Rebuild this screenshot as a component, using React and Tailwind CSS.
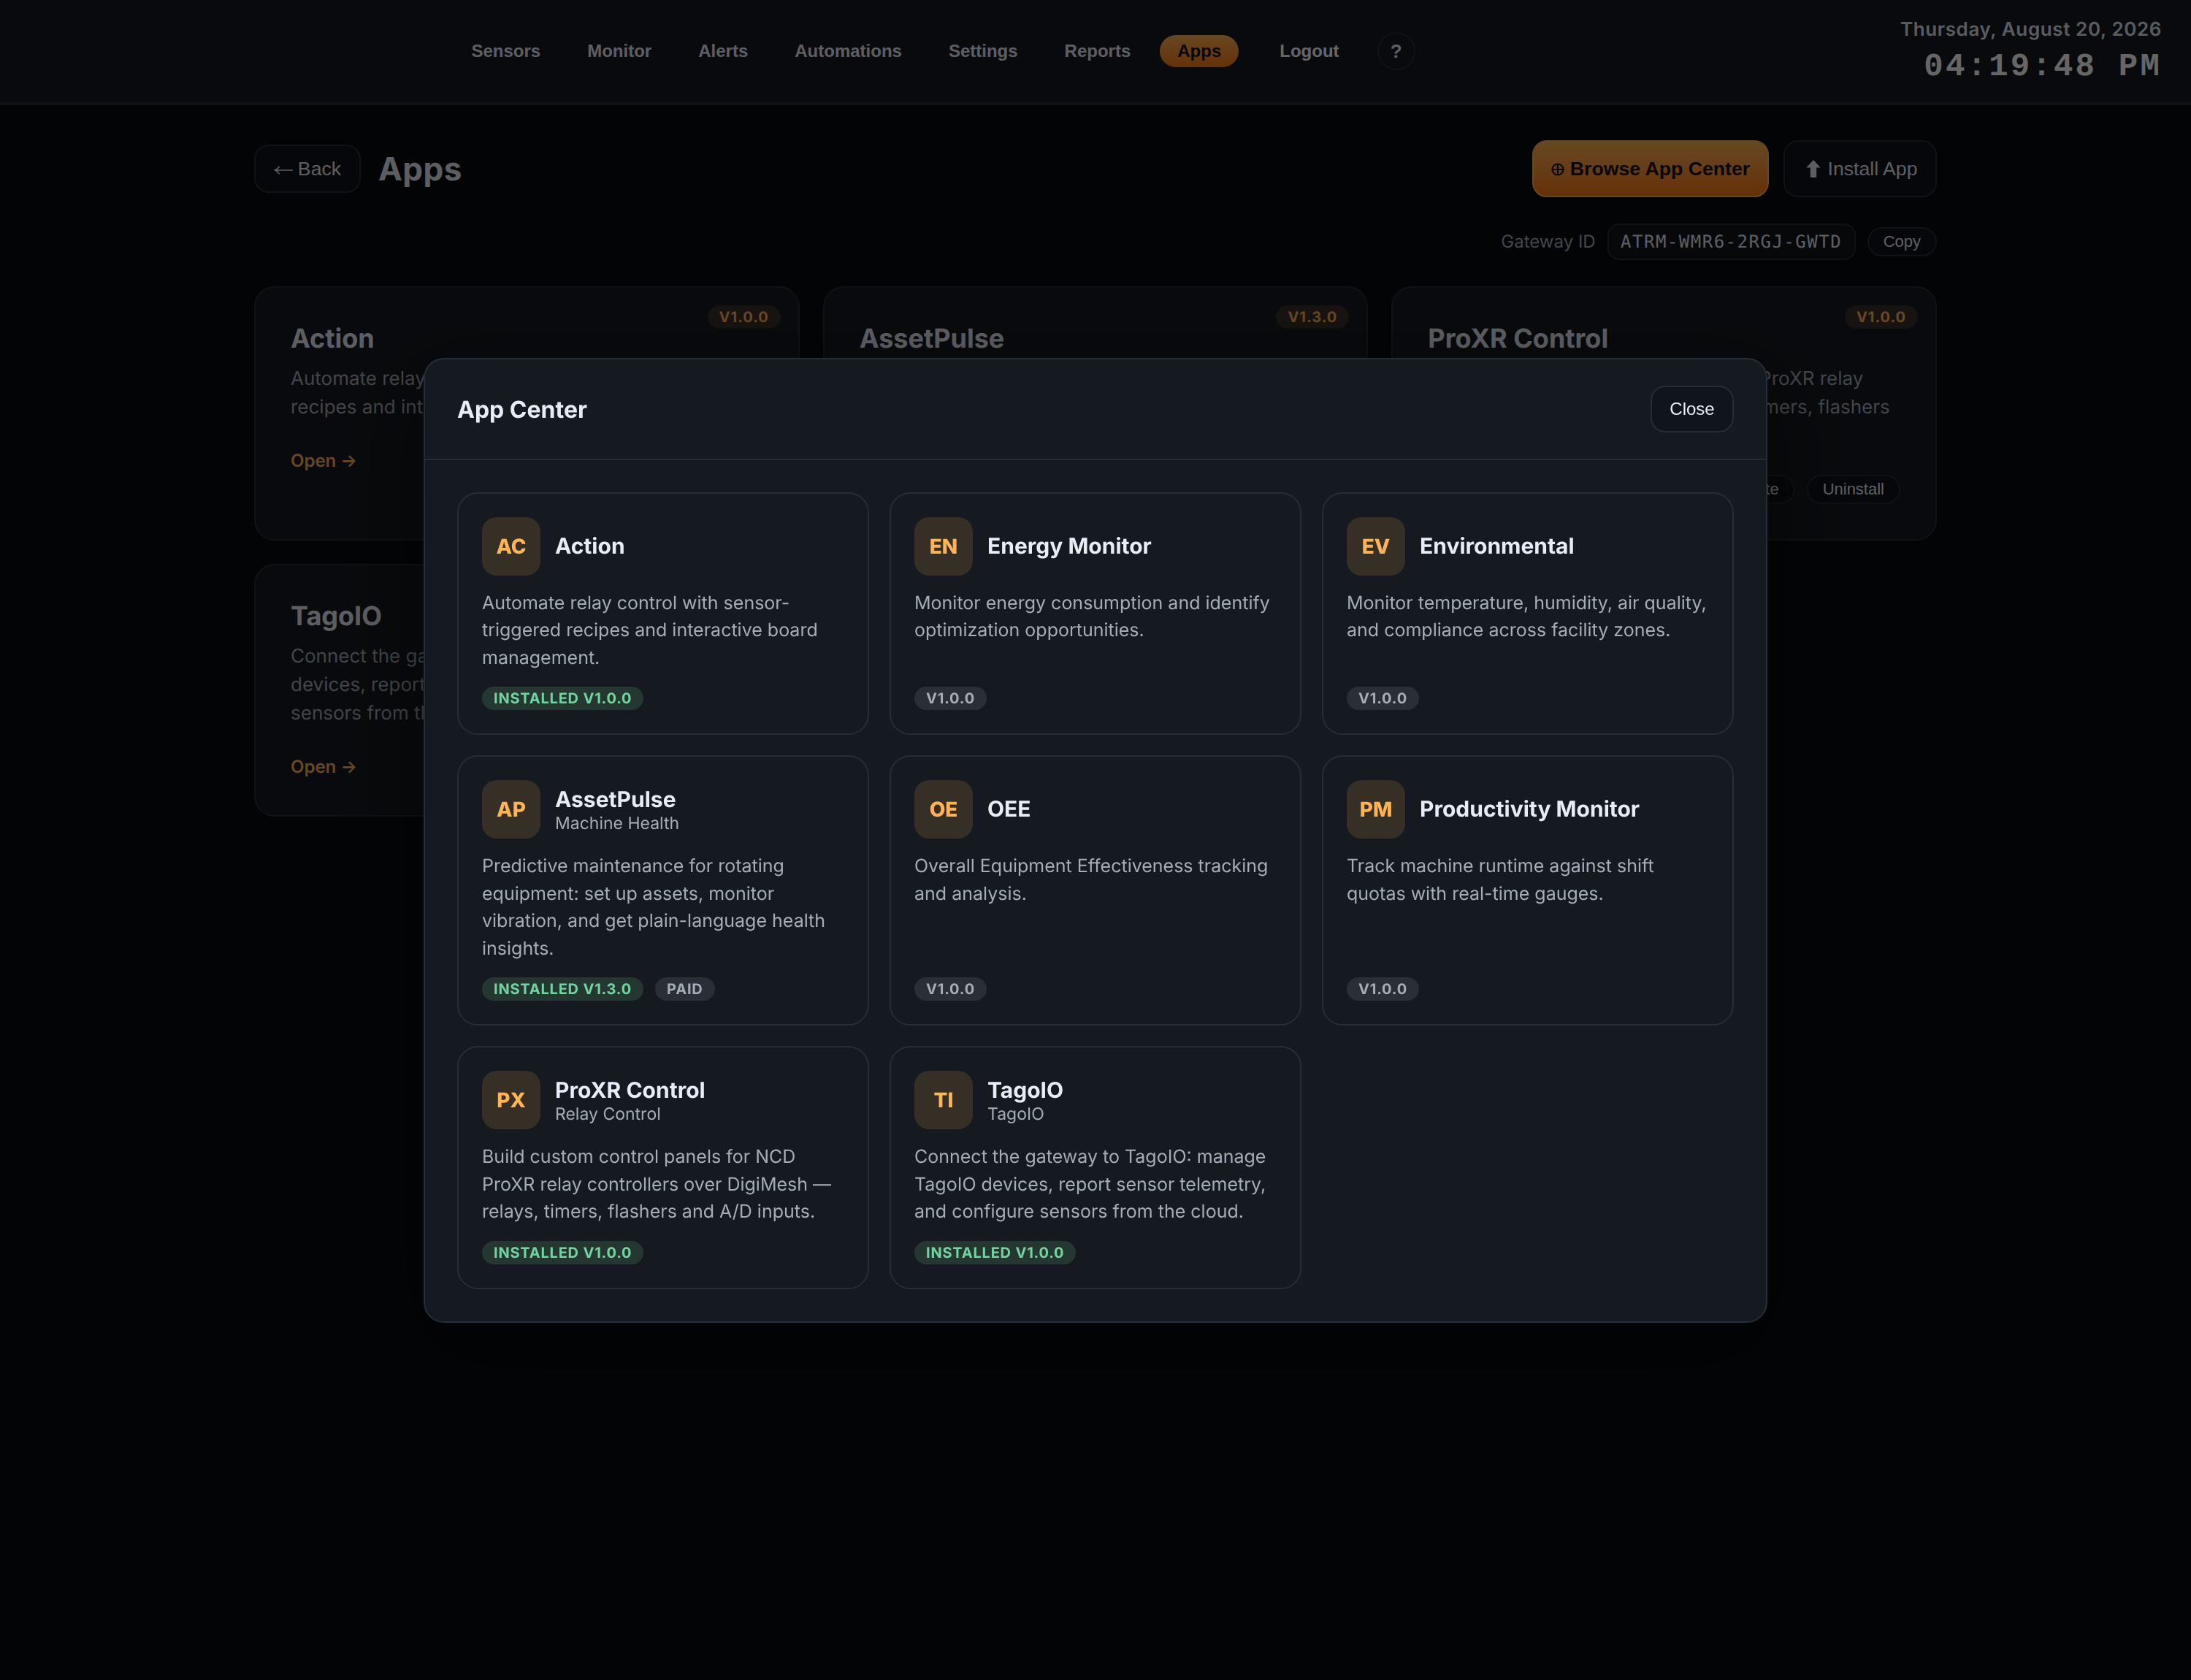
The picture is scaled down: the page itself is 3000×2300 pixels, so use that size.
import React from 'react';

const NAV_ITEMS = ['Sensors', 'Monitor', 'Alerts', 'Automations', 'Settings', 'Reports', 'Apps'];

const INSTALLED_APPS = [
    {
        name: 'Action',
        version: 'v1.0.0',
        description: 'Automate relay control with sensor-triggered recipes and interactive board management.',
    },
    {
        name: 'AssetPulse',
        version: 'v1.3.0',
        description: 'Predictive maintenance for rotating equipment: set up assets, monitor vibration, and get plain-language health insights.',
        removable: true,
    },
    {
        name: 'ProXR Control',
        version: 'v1.0.0',
        description: 'Build custom control panels for NCD ProXR relay controllers over DigiMesh — relays, timers, flashers and A/D inputs.',
        removable: true,
    },
    {
        name: 'TagoIO',
        version: 'v1.0.0',
        description: 'Connect the gateway to TagoIO: manage TagoIO devices, report sensor telemetry, and configure sensors from the cloud.',
        removable: true,
    },
];

const CATALOG = [
    { code: 'AC', name: 'Action', description: 'Automate relay control with sensor-triggered recipes and interactive board management.', version: '1.0.0', installed: true },
    { code: 'EN', name: 'Energy Monitor', description: 'Monitor energy consumption and identify optimization opportunities.', version: '1.0.0' },
    { code: 'EV', name: 'Environmental', description: 'Monitor temperature, humidity, air quality, and compliance across facility zones.', version: '1.0.0' },
    { code: 'AP', name: 'AssetPulse', subtitle: 'Machine Health', description: 'Predictive maintenance for rotating equipment: set up assets, monitor vibration, and get plain-language health insights.', version: '1.3.0', installed: true, paid: true },
    { code: 'OE', name: 'OEE', description: 'Overall Equipment Effectiveness tracking and analysis.', version: '1.0.0' },
    { code: 'PM', name: 'Productivity Monitor', description: 'Track machine runtime against shift quotas with real-time gauges.', version: '1.0.0' },
    { code: 'PX', name: 'ProXR Control', subtitle: 'Relay Control', description: 'Build custom control panels for NCD ProXR relay controllers over DigiMesh — relays, timers, flashers and A/D inputs.', version: '1.0.0', installed: true },
    { code: 'TI', name: 'TagoIO', subtitle: 'TagoIO', description: 'Connect the gateway to TagoIO: manage TagoIO devices, report sensor telemetry, and configure sensors from the cloud.', version: '1.0.0', installed: true },
];

const PillButton = ({ children }) => (
    <button className="h-10 shrink-0 rounded-full border-2 border-[#262e37] bg-[#0e121a] px-5 font-['Liberation_Sans',sans-serif] text-[22px] leading-none">
        {children}
    </button>
);

/* Top bar with navigation and the clock */
const Header = () => (
    <header className="flex h-36 items-center border-b-4 border-[#26313a] bg-[#151a21] pr-10 pl-[621.5px]">
        <nav className="flex items-center gap-4 font-['Liberation_Sans',sans-serif] text-2xl leading-7 font-bold">
            {NAV_ITEMS.map((item) => (
                <button
                    key={item}
                    className={
                        item === 'Apps'
                            ? 'h-11 rounded-full bg-linear-to-b from-[#ffb454] to-[#ff7a0a] px-6 text-[#14100a]'
                            : 'h-11 rounded-full px-6'
                    }
                >
                    {item}
                </button>
            ))}
            <button className="ml-3 h-11 px-7 text-white">Logout</button>
            <button className="ml-2 h-13 w-13 rounded-full border-2 border-[#262e37] text-[26px]">?</button>
        </nav>
        <div className="ml-auto self-start pt-[25px] text-right">
            <div className="text-[26px] leading-8 font-semibold tracking-[0.6px] text-[#dfe6ee]">Thursday, August 20, 2026</div>
            <div className="mt-2.5 font-['Liberation_Mono',monospace] text-[44px] leading-[50px] font-bold tracking-[3.2px] text-white">04:19:48 PM</div>
        </div>
    </header>
);

const InstalledCard = ({ app }) => (
    <div className="relative rounded-[28px] border-2 border-[#262e37] bg-[#151a21] px-12 pt-12">
        <span className="absolute top-6 right-6 flex h-8 w-[100px] items-center justify-center rounded-full bg-[#ffb454]/15 text-xl font-bold tracking-[0.05em] text-[#ffb454] uppercase">
            {app.version}
        </span>
        <h3 className="text-4xl leading-[43px] font-bold">{app.name}</h3>
        <p className="mt-3.5 text-[26px] leading-[39px] text-[#a5adb6]">{app.description}</p>
        <div className="mt-[34px] flex h-10 items-center gap-4">
            <a className="mr-auto text-2xl font-semibold text-[#ffb454]">Open →</a>
            {app.removable && (
                <>
                    <PillButton>Update</PillButton>
                    <PillButton>Uninstall</PillButton>
                </>
            )}
        </div>
    </div>
);

const Badge = ({ children, installed }) => (
    <span
        className={`flex h-8 items-center rounded-full px-4 text-xl font-bold tracking-[0.04em] uppercase ${
            installed ? 'bg-[#243731] text-[#74d4a0]' : 'bg-[#2a2e36] text-[#a5adb6]'
        }`}
    >
        {children}
    </span>
);

const CatalogCard = ({ app }) => (
    <div className="flex flex-col rounded-[28px] border-2 border-[#242e37] p-8">
        <div className="flex h-20 items-center gap-5">
            <div className="flex h-20 w-20 shrink-0 items-center justify-center rounded-[20px] bg-[#352f26] text-[28px] font-extrabold text-[#ffb454]">
                {app.code}
            </div>
            <div>
                <div className="text-[30px] leading-[38px] font-bold">{app.name}</div>
                {app.subtitle && <div className="text-[23px] leading-[26px] text-[#a5adb6]">{app.subtitle}</div>}
            </div>
        </div>
        <p className="my-5 text-[25px] leading-[37.5px] text-[#a5adb6]">{app.description}</p>
        <div className="mt-auto flex gap-4">
            <Badge installed={app.installed}>{app.installed ? `Installed v${app.version}` : `v${app.version}`}</Badge>
            {app.paid && <Badge>Paid</Badge>}
        </div>
    </div>
);

const AppCenterModal = () => (
    <div className="fixed inset-0 flex items-center justify-center bg-black/60">
        <div className="w-[1840px] rounded-[28px] border-2 border-[#242e37] bg-[#151a21] shadow-[0_40px_120px_rgba(0,0,0,0.5)]">
            <div className="flex h-[138px] items-center justify-between border-b-2 border-[#242e37] px-11">
                <h2 className="pt-0.5 text-[32px] font-bold">App Center</h2>
                <button className="h-16 w-[114px] rounded-[20px] border-2 border-[#242e37] bg-[#10151d] font-['Liberation_Sans',sans-serif] text-2xl">
                    Close
                </button>
            </div>
            <div className="grid grid-cols-3 gap-7 p-11">
                {CATALOG.map((app) => (
                    <CatalogCard key={app.code} app={app} />
                ))}
            </div>
        </div>
    </div>
);

export default function App() {
    return (
        <div className="h-[2300px] w-[3000px] overflow-hidden bg-[#080c11] font-['Inter',sans-serif] text-[#e8ecf6] [text-rendering:geometricPrecision]">
            <Header />
            <main className="mx-auto w-[2304px] pt-12">
                <div className="flex h-[78px] items-center">
                    <button className="flex h-[66px] w-[146px] items-center justify-center gap-[7px] rounded-[20px] border-2 border-[#262e37] bg-[#0e121a] font-['Liberation_Sans',sans-serif] text-[26.67px]">
                        <svg className="mt-1 h-3 w-[26px]" viewBox="0 0 26 12" fill="none" stroke="currentColor" strokeWidth="1.6">
                            <path d="M1.5 6H26M7.5 .7C6 3.5 4 5.2 1.5 6 4 6.8 6 8.5 7.5 11.3" />
                        </svg>
                        Back
                    </button>
                    <h1 className="ml-6 text-[44px] font-bold tracking-[0.01em]">Apps</h1>
                    <div className="ml-auto flex h-full gap-5 font-['Liberation_Sans',sans-serif] text-[26.67px]">
                        <button className="flex w-[324px] items-center justify-center gap-2 rounded-[20px] border-2 border-[#ffb454] bg-linear-to-b from-[#ffb454] to-[#ff7a0a] font-bold whitespace-nowrap text-[#14100a]">
                            <svg className="mt-0.5 h-[18px] w-[18px]" viewBox="0 0 18 18" fill="none" stroke="currentColor" strokeWidth="2.2">
                                <circle cx="9" cy="9" r="7.5" />
                                <path d="M9 1.5v15M1.5 9h15" />
                            </svg>
                            Browse App Center
                        </button>
                        <button className="flex w-[210px] items-center justify-center gap-[7px] rounded-[20px] border-2 border-[#262e37] bg-[#0e121a] whitespace-nowrap">
                            <svg className="h-6 w-[27px]" viewBox="0 0 27 24" fill="currentColor">
                                <path d="M14 0l9.7 10.5h-5.5V24H9.8V10.5H4.3z" />
                            </svg>
                            Install App
                        </button>
                    </div>
                </div>
                <div className="mt-9 flex h-[50px] items-center justify-end gap-4">
                    <span className="text-2xl text-[#a5adb6]">Gateway ID</span>
                    <code className="flex h-full w-[340px] items-center justify-center rounded-2xl border-2 border-[#262e37] bg-[#11151b] font-['DejaVu_Sans_Mono',monospace] text-2xl tracking-[1.5px]">
                        ATRM-WMR6-2RGJ-GWTD
                    </code>
                    <PillButton>Copy</PillButton>
                </div>
                <div className="mt-9 grid grid-cols-3 grid-rows-[348px_346px] gap-8">
                    {INSTALLED_APPS.map((app) => (
                        <InstalledCard key={app.name} app={app} />
                    ))}
                </div>
            </main>
            <AppCenterModal />
        </div>
    );
}
